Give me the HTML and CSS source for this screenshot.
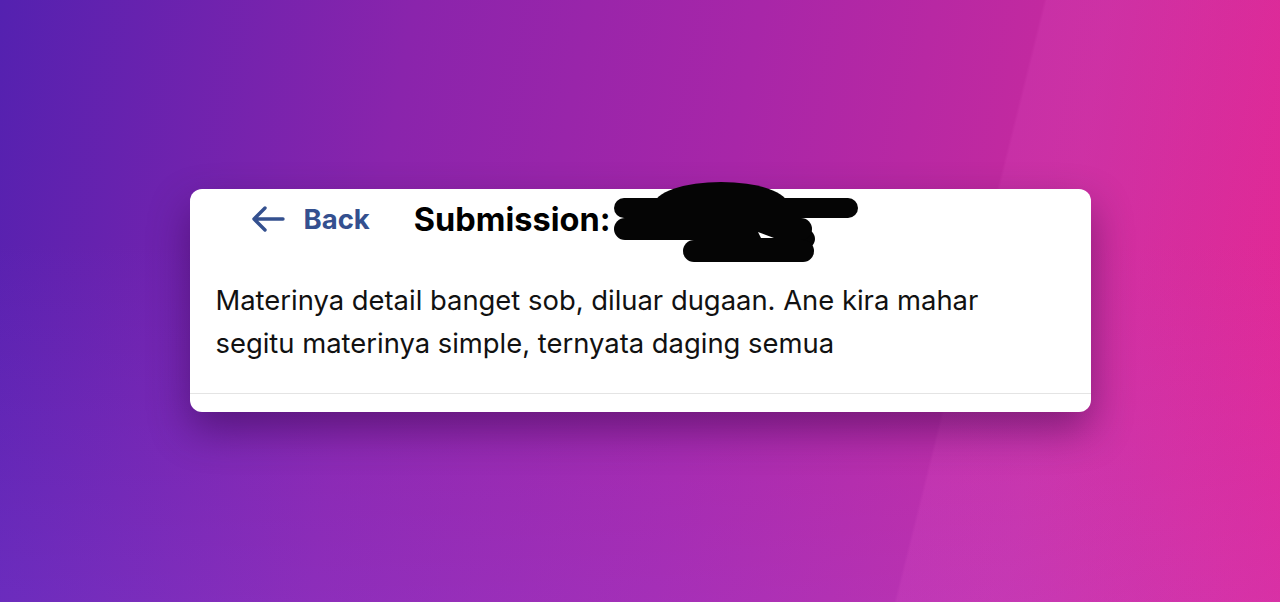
FILE: index.html
```html
<!DOCTYPE html>
<html lang="en">
<head>
    <meta charset="UTF-8">
    <title>Submission</title>
    <link rel="stylesheet" href="styles.css">
</head>
<body>
    <div class="card">
        <div class="card-header">
            <a class="back-link" href="#">
                <svg class="back-icon" viewBox="0 0 36 28" width="36" height="28">
                    <path d="M33 14H4M15 3L4 14l11 11" fill="none" stroke="currentColor" stroke-width="3.4" stroke-linecap="round" stroke-linejoin="round"/>
                </svg>
                <span>Back</span>
            </a>
            <h2 class="title">Submission:</h2>
        </div>
        <p class="comment">Materinya detail banget sob, diluar dugaan. Ane kira mahar segitu materinya simple, ternyata daging semua</p>
        <div class="card-footer"></div>

        <!-- scribble over the name -->
        <svg class="redacted" viewBox="0 0 270 95" width="270" height="95">
            <g fill="#050505">
                <ellipse cx="120" cy="30" rx="67" ry="23"/>
                <ellipse cx="158" cy="64" rx="56" ry="22"/>
            </g>
            <g fill="none" stroke="#050505" stroke-linecap="round">
                <path d="M23 33H247" stroke-width="20"/>
                <path d="M24 54H200" stroke-width="22"/>
                <path d="M93 76H202" stroke-width="22"/>
            </g>
            <path d="M157 57l16 6h-13z" fill="#fff"/>
        </svg>
    </div>
</body>
</html>
```

FILE: styles.css
```css
html, body {
    height: 100%;
}
body {
    margin: 0;
    font-family: 'Inter', 'Noto Sans', sans-serif;
    background:
        linear-gradient(104deg, rgba(255, 110, 220, 0) 1013px, rgba(255, 110, 220, 0.1) 1016px),
        linear-gradient(180deg, rgba(150, 90, 255, 0) 40%, rgba(150, 90, 255, 0.18) 100%),
        linear-gradient(100deg, #5421b0 0%, #8a24ac 30%, #a826a8 55%, #c82a9e 80%, #e21f8a 100%);
    display: flex;
    justify-content: center;
    align-items: flex-start;
    overflow: hidden;
}
.card {
    position: relative;
    margin-top: 189px;
    width: 901px;
    background: #fff;
    border-radius: 12px;
    box-shadow: 0 18px 40px rgba(40, 0, 60, 0.45);
}
.card-header {
    display: flex;
    align-items: center;
    height: 60px;
    padding-left: 60px;
}
.back-link {
    display: flex;
    align-items: center;
    gap: 18px;
    color: #34508f;
    text-decoration: none;
    font-size: 27.5px;
    font-weight: 700;
    margin-right: 44px;
}
.back-icon {
    display: block;
}
.title {
    margin: 0;
    font-size: 32.5px;
    font-weight: 700;
    color: #000;
}
.redacted {
    position: absolute;
    left: 411px;
    top: -14px;
}
.comment {
    margin: 30px 0 0;
    padding: 0 60px 0 26px;
    font-size: 27.4px;
    line-height: 43px;
    color: #111;
}
.card-footer {
    margin-top: 28px;
    height: 18px;
    border-top: 1px solid #e4e4e4;
}
```
